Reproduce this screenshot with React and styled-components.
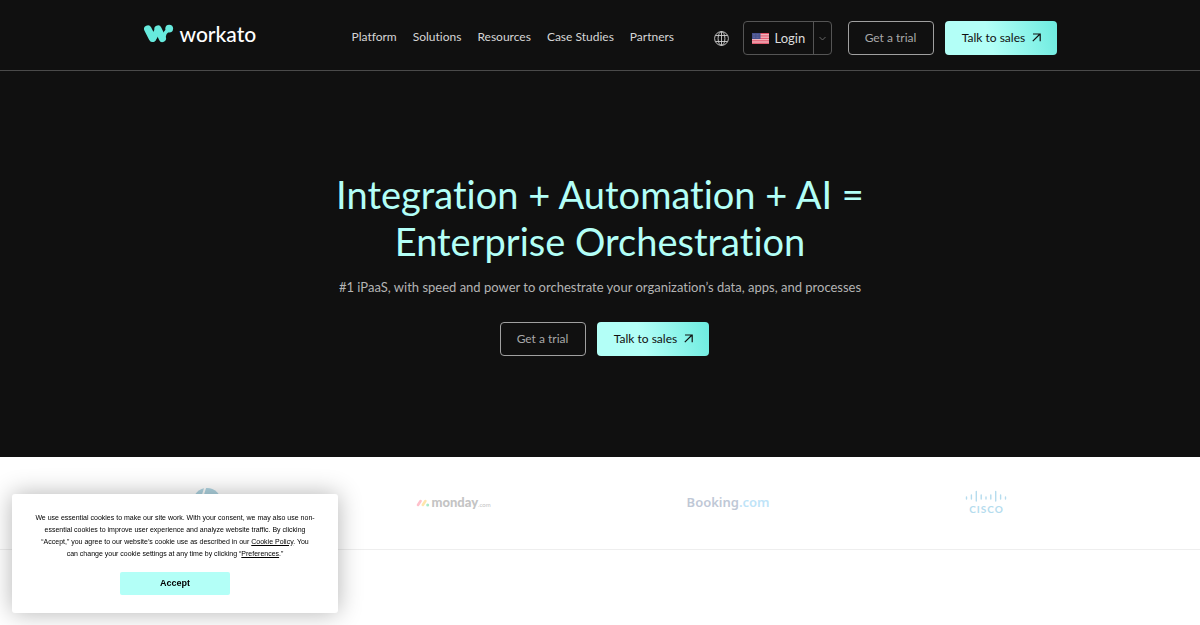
import React from "react";
import styled, { createGlobalStyle } from "styled-components";

const GlobalStyle = createGlobalStyle`
  * {
    box-sizing: border-box;
  }
  body {
    margin: 0;
    background-color: #fff;
    font-family: Lato, "Open Sans", sans-serif;
    font-variant-ligatures: none;
  }
`;

const Header = styled.header`
  background-color: #101010;
  border-bottom: 1px solid #4a4a4a;
  padding: 21px 24px 15px;
`;

const HeaderInner = styled.div`
  max-width: 913px;
  margin: 0 auto;
  display: flex;
  align-items: center;
`;

const Logo = styled.a`
  display: flex;
  align-items: center;
  gap: 6px;
  width: 208px;
  height: 34px;
  padding-bottom: 8px;
  color: #fff;
  font-size: 21px;
  line-height: 26px;
  text-decoration: none;
`;

const LogoText = styled.span`
  font-weight: 500;
`;

const Nav = styled.nav`
  display: flex;
  gap: 16px;
  padding-bottom: 2px;
`;

const NavLink = styled.a`
  color: #d6d6d6;
  font-size: 12px;
  line-height: 18px;
  text-decoration: none;
`;

const Actions = styled.div`
  display: flex;
  align-items: center;
  margin-left: auto;
`;

const IconButton = styled.button`
  display: flex;
  padding: 0;
  border: 0;
  background: none;
  color: #cfcfcf;
  margin-right: 14px;
`;

const LoginGroup = styled.div`
  display: flex;
  height: 34px;
  border: 1px solid #555;
  border-radius: 4px;
  margin-right: 16px;
`;

const LoginLink = styled.a`
  display: flex;
  align-items: center;
  gap: 6px;
  width: 69px;
  padding-left: 8px;
  color: #dcdcdc;
  font-size: 13px;
  text-decoration: none;
`;

const LoginToggle = styled.button`
  display: flex;
  align-items: center;
  justify-content: center;
  width: 18px;
  padding: 0;
  border: 0;
  border-left: 1px solid #555;
  background: none;
  color: #666;
`;

const ButtonRow = styled.div`
  display: flex;
  justify-content: center;
  gap: 11px;
`;

const Button = styled.button`
  display: flex;
  align-items: center;
  justify-content: center;
  gap: 7px;
  width: ${(props) => (props.$primary ? "112px" : "86px")};
  height: 34px;
  padding: ${(props) => (props.$primary ? "0 0 2px 2px" : "0 0 2px")};
  border: ${(props) => (props.$primary ? "0" : "1px solid #a0a0a0")};
  border-radius: 4px;
  background: ${(props) =>
    props.$primary
      ? "linear-gradient(75deg, #b3fff7 40%, #6cebdf 100%)"
      : "transparent"};
  color: ${(props) => (props.$primary ? "#101010" : "#a8a8a8")};
  font-family: inherit;
  font-size: 12px;
`;

const Hero = styled.section`
  background-color: #101010;
  padding: 100px 24px 101px;
  text-align: center;
`;

const Title = styled.h1`
  max-width: 640px;
  margin: 0 auto 12px;
  color: #b3fff7;
  font-size: 38px;
  font-weight: 400;
  line-height: 47px;
`;

const Subtitle = styled.p`
  margin: 0 0 25px;
  color: #b4b4b4;
  font-size: 13px;
  line-height: 20px;
`;

const HeroActions = styled.div`
  padding-left: 8px;
`;

const Customers = styled.section`
  border-bottom: 1px solid #eee;
  padding: 0 24px;
`;

const CustomerList = styled.div`
  display: flex;
  align-items: center;
  justify-content: space-between;
  max-width: 815px;
  height: 92px;
  margin: 0 auto;
  padding-bottom: 2px;
`;

const Monday = styled.div`
  display: flex;
  align-items: baseline;
  color: #c4c4c4;
  font-size: 13px;
  font-weight: 900;
`;

const MondaySuffix = styled.span`
  font-size: 6px;
  font-weight: 400;
`;

const Booking = styled.div`
  color: #bfc8d6;
  font-family: "Noto Sans", sans-serif;
  font-size: 13px;
  font-weight: 600;
`;

const BookingSuffix = styled.span`
  color: #bfe4f8;
`;

const Cisco = styled.div`
  display: flex;
  flex-direction: column;
  align-items: center;
  color: #b5dcee;
  font-size: 10px;
  font-weight: 700;
  letter-spacing: 1px;
  line-height: 12px;
`;

const CookieBanner = styled.aside`
  position: fixed;
  left: 12px;
  bottom: 12px;
  width: 326px;
  padding: 18px 20px;
  border-radius: 3px;
  background-color: #fff;
  box-shadow: 0 0 24px rgba(0, 0, 0, 0.3);
  color: #000;
  font-family: "Liberation Sans", Arial, sans-serif;
  text-align: center;
`;

const CookieText = styled.p`
  margin: 0 0 12px;
  font-size: 7px;
  line-height: 12px;
`;

const CookieLink = styled.a`
  color: inherit;
`;

const AcceptButton = styled.button`
  width: 110px;
  height: 23px;
  padding: 0 0 2px;
  border: 0;
  border-radius: 2px;
  background-color: #b3fff7;
  color: #000;
  font-family: inherit;
  font-size: 9px;
  font-weight: 700;
`;

const navItems = [
  "Platform",
  "Solutions",
  "Resources",
  "Case Studies",
  "Partners",
];

const WorkatoMark = () => (
  <svg width="30" height="20" viewBox="0 0 30 20" aria-hidden="true">
    <g stroke="#67eadd" strokeLinecap="round" fill="none">
      <path d="M3.8 5L8.4 14.2" strokeWidth="7.4" />
      <path d="M9 14.6L14 6" strokeWidth="6.4" />
      <path d="M14 5L18.4 14.4" strokeWidth="7.2" />
      <path d="M19.6 13.4Q20.6 8 24.6 5.4" strokeWidth="3.6" />
    </g>
    <circle cx="25.2" cy="4.6" r="3.9" fill="#67eadd" />
  </svg>
);

const Globe = () => (
  <svg
    width="15"
    height="15"
    viewBox="0 0 15 15"
    fill="none"
    stroke="currentColor"
    strokeWidth=".9"
    aria-hidden="true"
  >
    <circle cx="7.5" cy="7.5" r="6.9" />
    <ellipse cx="7.5" cy="7.5" rx="3.4" ry="6.9" />
    <path d="M7.5 .6v13.8M1.5 4.5h12M1.5 10.5h12" />
  </svg>
);

const Flag = () => (
  <svg width="17" height="11" viewBox="0 0 17 11" aria-hidden="true">
    <rect width="17" height="11" fill="#f6dfe2" />
    <path
      d="M0 .5h17M0 2.2h17M0 3.9h17M0 5.6h17M0 7.3h17M0 9h17M0 10.6h17"
      stroke="#dc4058"
      strokeWidth=".9"
    />
    <rect width="8.5" height="6" fill="#47508c" />
    <path
      d="M1 1.5h7M1 3h7M1 4.5h7"
      stroke="#8d93bb"
      strokeWidth=".5"
      strokeDasharray=".6 .8"
    />
  </svg>
);

const Chevron = () => (
  <svg
    width="7"
    height="5"
    viewBox="0 0 7 5"
    fill="none"
    stroke="currentColor"
    aria-hidden="true"
  >
    <path d="M.5 1l3 3 3-3" />
  </svg>
);

const Arrow = () => (
  <svg
    width="9"
    height="9"
    viewBox="0 0 9 9"
    fill="none"
    stroke="currentColor"
    strokeWidth="1.2"
    aria-hidden="true"
  >
    <path d="M.8 8.2L8 1M1 1h7.2v7.2" />
  </svg>
);

const HpLogo = () => (
  <svg width="28" height="28" viewBox="0 0 26 26" role="img" aria-label="HP">
    <circle cx="13" cy="13" r="13" fill="#b0d5e2" />
    <path
      d="M11.5 -1L5 20M9 9h3q2 0 1 3l-3 8M18 9l-6 17M17 9h4q2 0 1 3l-2 6q-1 2-3 2h-3"
      fill="none"
      stroke="#fff"
      strokeWidth="1.8"
    />
  </svg>
);

const MondayMark = () => (
  <svg width="15" height="8" viewBox="0 0 15 8" aria-hidden="true">
    <g strokeWidth="2.6" strokeLinecap="round">
      <path d="M2 6l2.6-4" stroke="#ffc0cb" />
      <path d="M6.8 6l2.6-4" stroke="#ffe5ad" />
    </g>
    <circle cx="11.7" cy="6" r="1.5" fill="#a9e9c8" />
  </svg>
);

const CiscoBars = () => (
  <svg width="42" height="13" viewBox="0 0 42 13" aria-hidden="true">
    <path
      d="M1.5 7v2M6.4 5v4M11.3 1.5v9.5M16.2 5v4M21 7v2M25.8 5v4M30.7 1.5v9.5M35.6 5v4M40.5 7v2"
      stroke="#b5dcee"
      strokeWidth="1.4"
      strokeLinecap="round"
    />
  </svg>
);

const TrialAndSales = () => (
  <ButtonRow>
    <Button>Get a trial</Button>
    <Button $primary>
      Talk to sales
      <Arrow />
    </Button>
  </ButtonRow>
);

const App = () => {
  return (
    <>
      <GlobalStyle />
      <Header>
        <HeaderInner>
          <Logo href="#">
            <WorkatoMark />
            <LogoText>workato</LogoText>
          </Logo>
          <Nav>
            {navItems.map((item) => (
              <NavLink href="#" key={item}>
                {item}
              </NavLink>
            ))}
          </Nav>
          <Actions>
            <IconButton aria-label="Language">
              <Globe />
            </IconButton>
            <LoginGroup>
              <LoginLink href="#">
                <Flag />
                Login
              </LoginLink>
              <LoginToggle aria-label="Choose region">
                <Chevron />
              </LoginToggle>
            </LoginGroup>
            <TrialAndSales />
          </Actions>
        </HeaderInner>
      </Header>
      <Hero>
        <Title>
          Integration + Automation + AI =
          <br />
          Enterprise Orchestration
        </Title>
        <Subtitle>
          #1 iPaaS, with speed and power to orchestrate your organization’s
          data, apps, and processes
        </Subtitle>
        <HeroActions>
          <TrialAndSales />
        </HeroActions>
      </Hero>
      <Customers>
        <CustomerList>
          <HpLogo />
          <Monday>
            <MondayMark />
            monday<MondaySuffix>.com</MondaySuffix>
          </Monday>
          <Booking>
            Booking<BookingSuffix>.com</BookingSuffix>
          </Booking>
          <Cisco>
            <CiscoBars />
            CISCO
          </Cisco>
        </CustomerList>
      </Customers>
      <CookieBanner>
        <CookieText>
          We use essential cookies to make our site work. With your consent, we
          may also use non-essential cookies to improve user experience and
          analyze website traffic. By clicking “Accept,” you agree to our
          website’s cookie use as described in our{" "}
          <CookieLink href="#">Cookie Policy</CookieLink>. You can&nbsp;change
          your cookie settings at any time by clicking “
          <CookieLink href="#">Preferences</CookieLink>.”
        </CookieText>
        <AcceptButton>Accept</AcceptButton>
      </CookieBanner>
    </>
  );
};

export default App;
